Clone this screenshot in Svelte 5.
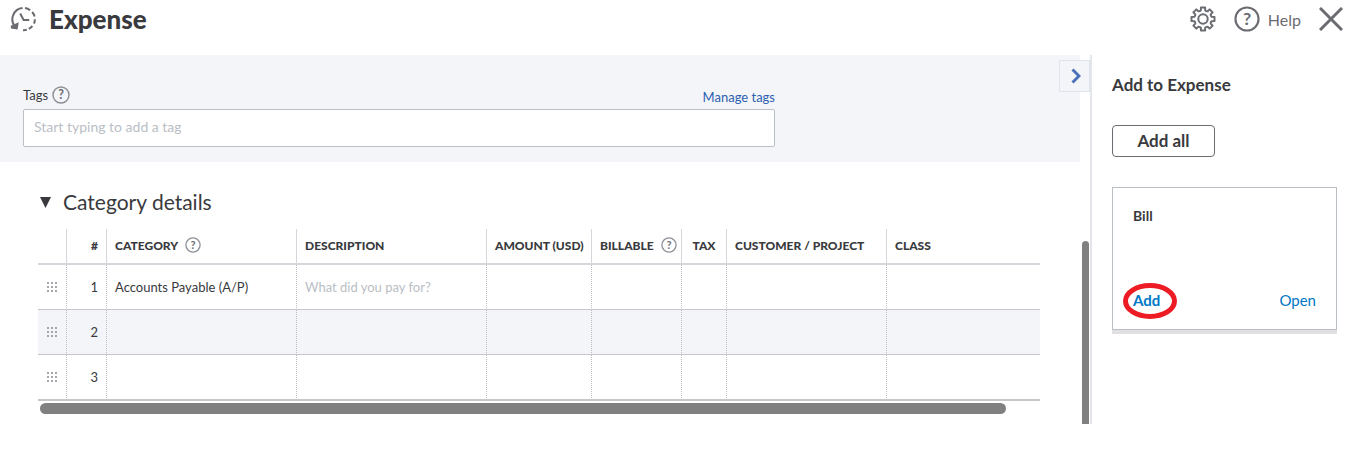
<script lang="ts">
	interface Line {
		id: number,
		category: string,
		placeholder: string,
	}

	const columns = [
		{ label: '', width: 29 },
		{ label: '#', width: 40 },
		{ label: 'CATEGORY', width: 190, help: true },
		{ label: 'DESCRIPTION', width: 190 },
		{ label: 'AMOUNT (USD)', width: 105 },
		{ label: 'BILLABLE', width: 90, help: true },
		{ label: 'TAX', width: 45 },
		{ label: 'CUSTOMER / PROJECT', width: 160 },
		{ label: 'CLASS', width: 0 },
	];

	const lines: Line[] = [
		{ id: 1, category: 'Accounts Payable (A/P)', placeholder: 'What did you pay for?' },
		{ id: 2, category: '', placeholder: '' },
		{ id: 3, category: '', placeholder: '' },
	];

	const dots = [1, 5, 9];

	let tag = $state('');
	let open = $state(true);

	// one tooth every 45 degrees
	const gearPath = (teeth: number, outer: number, inner: number) => {
		const step = (Math.PI * 2) / teeth;
		const at = (angle: number, r: number) =>
			`${(13 + Math.sin(angle) * r).toFixed(2)} ${(13 - Math.cos(angle) * r).toFixed(2)}`;
		let d = '';
		for (let i = 0; i < teeth; i++) {
			const a = i * step;
			d += `${i ? 'L' : 'M'}${at(a - 0.24, inner)} L${at(a - 0.18, outer)} L${at(a + 0.18, outer)} L${at(a + 0.24, inner)} `;
			d += `Q${at(a + step / 2, inner - 1)} ${at(a + step - 0.24, inner)} `;
		}
		return d + 'Z';
	};
</script>

{#snippet helpIcon(size: number)}
	<svg class="help-icon" width={size} height={size} viewBox="0 0 16 16" aria-hidden="true">
		<circle cx="8" cy="8" r="7.1" />
		<text x="8" y="11.8" text-anchor="middle">?</text>
	</svg>
{/snippet}

<div class="page">
	<header>
		<svg class="history" width="28" height="28" viewBox="0 0 28 28" aria-hidden="true">
			<path d="M5.5 23A11.2 11.2 0 0 1 12.6 4.1" />
			<path d="M15 4A11.2 11.2 0 0 1 20.2 6.2M22.2 8A11.2 11.2 0 0 1 24.6 12.6M24.9 15.2A11.2 11.2 0 0 1 24 19.6M22.4 22A11.2 11.2 0 0 1 18.8 24.8M16.8 25.8A11.2 11.2 0 0 1 13 26.2" />
			<path class="head" d="M0.8 21.8L8.8 18.2L7.6 25.4L0.8 24.4Z" />
			<path d="M10.2 9.5L13.6 16H19.2" />
		</svg>
		<h1>Expense</h1>
		<button class="icon gear" aria-label="Settings">
			<svg width="26" height="26" viewBox="0 0 26 26">
				<path d={gearPath(8, 11.7, 9)} />
				<circle cx="13" cy="13" r="4.7" />
			</svg>
		</button>
		<button class="icon help">{@render helpIcon(26)}<span>Help</span></button>
		<button class="icon close" aria-label="Close">
			<svg width="24" height="24" viewBox="0 0 24 24"><path d="M1 1L23 23M23 1L1 23" /></svg>
		</button>
	</header>

	<div class="body">
		<main>
			<section class="tags">
				<div class="tags-inner">
					<div class="tags-head">
						<label for="tags">Tags</label>
						{@render helpIcon(18)}
						<a href="#tags">Manage tags</a>
					</div>
					<div class="tags-box">
						<input id="tags" placeholder="Start typing to add a tag" bind:value={tag} />
					</div>
				</div>
			</section>

			<section class="details">
				<h2>
					<button aria-expanded={open} onclick={() => (open = !open)}>
						<svg width="11" height="11" viewBox="0 0 11 11" class:closed={!open}><path d="M0 0H11L5.5 11Z" /></svg>
						Category details
					</button>
				</h2>
				{#if open}
					<table>
						<colgroup>
							{#each columns as { width }}
								<col style={width ? `width: ${width}px` : ''} />
							{/each}
						</colgroup>
						<thead>
							<tr>
								{#each columns as { label, help }}
									<th class:num={label === '#'} class:center={label === 'TAX'}>
										<div>{label}{#if help}{@render helpIcon(16)}{/if}</div>
									</th>
								{/each}
							</tr>
						</thead>
						<tbody>
							{#each lines as line (line.id)}
								<tr>
									<td class="grip">
										<svg width="11" height="11" viewBox="0 0 11 11" aria-hidden="true">
											{#each dots as y}
												{#each dots as x}
													<rect x={x - 1} y={y - 1} width="2" height="2" />
												{/each}
											{/each}
										</svg>
									</td>
									<td class="num">{line.id}</td>
									<td>{line.category}</td>
									<td class="placeholder">{line.placeholder}</td>
									<td></td>
									<td></td>
									<td></td>
									<td></td>
									<td></td>
								</tr>
							{/each}
						</tbody>
					</table>
					<div class="scroll-x"></div>
				{/if}
			</section>
		</main>

		<div class="rail">
			<button class="collapse" aria-label="Collapse panel">
				<svg width="10" height="16" viewBox="0 0 10 16"><path d="M1.5 1.5L8 8L1.5 14.5" /></svg>
			</button>
			<div class="scroll-y"></div>
		</div>

		<aside>
			<h3>Add to Expense</h3>
			<button class="add-all">Add all</button>
			<article>
				<h4>Bill</h4>
				<div class="actions">
					<a class="add" href="#add">
						Add
						<svg class="ring" width="54" height="36" viewBox="0 0 54 36" aria-hidden="true">
							<ellipse cx="27" cy="18" rx="24.5" ry="15.5" />
						</svg>
					</a>
					<a href="#open">Open</a>
				</div>
			</article>
		</aside>
	</div>
</div>

<style>
	:global(body) {
		background: #fff;
	}

	.page {
		font-family: Lato, "Liberation Sans", sans-serif;
		font-size: 13px;
		color: #393a3d;
	}

	h1, h2, h3, h4 {
		margin: 0;
	}

	button {
		font: inherit;
		color: inherit;
		background: none;
		border: 0;
		padding: 0;
		cursor: pointer;
	}

	a {
		text-decoration: none;
		color: #0077c5;
	}

	svg {
		display: block;
		flex: none;
		fill: none;
	}

	header {
		display: flex;
		align-items: center;
		height: 38px;
		padding: 0 5px 17px 10px;
	}

	.history {
		stroke: #6b6c72;
		stroke-width: 2;
		margin-bottom: 2px;
	}

	.history .head {
		fill: #6b6c72;
		stroke: none;
	}

	h1 {
		flex: 1;
		margin-left: 11px;
		font-size: 26px;
		line-height: 30px;
		font-weight: 900;
	}

	.icon {
		display: flex;
		align-items: center;
		color: #6b6c72;
		stroke: currentColor;
		font-size: 16px;
	}

	.gear {
		stroke-width: 2;
		stroke-linejoin: round;
	}

	.help {
		gap: 8px;
		margin: 0 18px;
	}

	.help span {
		stroke: none;
	}

	.close {
		stroke-width: 3;
	}

	.help-icon {
		stroke: #8d9096;
		stroke-width: 1.3;
	}

	.help .help-icon {
		stroke: #6b6c72;
	}

	.help-icon text {
		fill: #6b6c72;
		stroke: none;
		font-size: 11px;
		font-weight: 700;
	}

	.body {
		display: flex;
	}

	main {
		flex: 1;
		min-width: 0;
	}

	.tags {
		background: #f4f5f8;
		padding: 31px 23px 15px;
	}

	.tags-inner {
		max-width: 752px;
	}

	.tags-head {
		display: flex;
		align-items: center;
		gap: 4px;
		height: 18px;
		margin-bottom: 5px;
	}

	.tags-head a {
		margin-left: auto;
		padding-top: 4px;
		color: #2c5fb0;
	}

	.tags-box {
		background: #fff;
		border: 1px solid #babec5;
		border-radius: 2px;
		padding: 0 10px 4px;
	}

	input {
		display: block;
		width: 147px;
		height: 32px;
		padding: 0;
		border: 0;
		outline: 0;
		background: none;
		font: inherit;
		font-size: 14px;
	}

	input::placeholder {
		color: #babec5;
	}

	.details {
		padding: 26px 40px 10px 38px;
	}

	h2 {
		font-size: 21px;
		line-height: 28px;
		font-weight: 400;
		margin-bottom: 13px;
	}

	h2 button {
		display: flex;
		align-items: center;
		gap: 12px;
		padding-left: 2px;
	}

	h2 svg {
		fill: #393a3d;
	}

	h2 .closed {
		transform: rotate(-90deg);
	}

	table {
		width: 100%;
		table-layout: fixed;
		border-collapse: separate;
		border-spacing: 0;
		border-bottom: 1px solid #c7c7c7;
	}

	th, td {
		box-sizing: border-box;
		padding: 0 8px;
		text-align: left;
		white-space: nowrap;
	}

	th {
		height: 36px;
		padding-bottom: 2px;
		border-right: 1px solid #d4d7dc;
		border-bottom: 2px solid #d4d7dc;
		font-size: 12px;
		font-weight: 900;
	}

	th div {
		display: flex;
		align-items: center;
		gap: 7px;
	}

	td {
		height: 45px;
		border-right: 1px dotted #babec5;
		border-bottom: 1px solid #c7c7c7;
	}

	th:last-child, td:last-child {
		border-right: 0;
	}

	tr:nth-child(even) td {
		background: #f4f5f8;
	}

	.num {
		text-align: right;
	}

	.num div {
		justify-content: flex-end;
	}

	.center div {
		justify-content: center;
	}

	.grip {
		padding-left: 9px;
	}

	.grip svg {
		fill: #a5a6aa;
	}

	.placeholder {
		color: #babec5;
	}

	.scroll-x {
		width: 96.4%;
		height: 11px;
		margin: 2px 0 0 2px;
		border-radius: 6px;
		background: #808080;
	}

	.rail {
		position: relative;
		display: flex;
		width: 10px;
		border-right: 2px solid #e3e5ea;
	}

	.collapse {
		position: absolute;
		top: 5px;
		right: 0;
		display: grid;
		place-items: center;
		width: 31px;
		height: 32px;
		padding-left: 2px;
		border: 1px solid #dfe5ee;
		background: #f4f5f8;
		stroke: #4b71ba;
		stroke-width: 3;
	}

	.scroll-y {
		align-self: flex-end;
		width: 7px;
		height: 183px;
		margin-left: 2px;
		border-radius: 4px 4px 0 0;
		background: #808080;
	}

	aside {
		box-sizing: border-box;
		width: 256px;
		padding: 20px 11px 0 20px;
	}

	h3 {
		font-size: 17px;
		line-height: 20px;
		font-weight: 700;
	}

	.add-all {
		width: 103px;
		height: 32px;
		margin: 30px 0;
		padding-bottom: 2px;
		border: 1px solid #6b6c72;
		border-radius: 4px;
		font-size: 17px;
		font-weight: 700;
	}

	article {
		padding: 18px 20px 19px;
		border: 1px solid #babec5;
		box-shadow: 0 4px 0 #e0e0e0;
		font-size: 15px;
		line-height: 20px;
	}

	h4 {
		font-size: 14px;
		font-weight: 700;
		margin-bottom: 64px;
	}

	.actions {
		display: flex;
		justify-content: space-between;
	}

	.add {
		position: relative;
		font-weight: 700;
	}

	.ring {
		position: absolute;
		top: -7px;
		left: -10px;
		stroke: #ed1c24;
		stroke-width: 5;
		pointer-events: none;
	}
</style>
